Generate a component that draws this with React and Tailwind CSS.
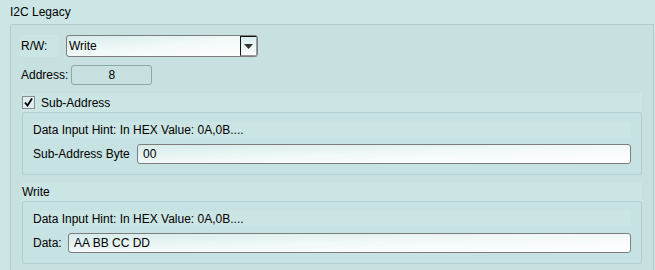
import React from 'react';

const font = { fontFamily: '"Liberation Sans", Arial, sans-serif' };

function TextBox({ value, className = '' }) {
  return (
    <div
      className={`h-[20px] flex items-center pl-[5px] rounded-[3px] border border-[#7d7d7d] bg-gradient-to-br from-[#d6ebeb] via-[#f2f9f9] to-white text-[12px] text-black ${className}`}
    >
      {value}
    </div>
  );
}

function HintBox({ label, value, labelWidth }) {
  return (
    <div className="border border-[#b3d0d0] rounded-[2px] bg-[#c7e2e2] pl-[10px] pr-[10px] pt-[9px] pb-[10px]">
      <div className="h-[16px] flex items-center bg-[#cbe5e5] text-[12px]">
        Data Input Hint: In HEX Value: 0A,0B....
      </div>
      <div className="flex items-center mt-[6px]">
        <span className={`text-[12px] ${labelWidth}`}>{label}</span>
        <TextBox value={value} className="flex-1" />
      </div>
    </div>
  );
}

export default function App() {
  return (
    <div className="w-[655px] h-[270px] bg-[#cce5e5] text-black overflow-hidden flex flex-col" style={font}>
      <div className="h-[24px] pl-[10px] pt-[5px] text-[12px] leading-[14px]">I2C Legacy</div>
      <div className="flex-1 ml-[10px] mr-[1px] border-l border-t border-r border-[#b0cdcd] rounded-tl-[2px] bg-[#c7e1e1] pt-[10px] pl-[11px] pr-[11px]">
        <div className="flex items-center h-[22px]">
          <div className="w-[39px] ml-[-2px] h-[22px] flex items-center pl-[1px] bg-[#cbe4e4] text-[12px]">R/W:</div>
          <div className="ml-[7px] w-[192px] h-[22px] flex items-center rounded-[3px] border border-[#7d7d7d] bg-gradient-to-br from-[#d6ebeb] via-[#f2f9f9] to-white text-[12px] pl-[2px]">
            <span className="flex-1">Write</span>
            <div className="w-[17px] h-[20px] border border-[#111] border-r-[#9a9a9a] border-b-[#9a9a9a] bg-gradient-to-b from-[#d8ecec] to-white flex items-center justify-center">
              <svg width="9" height="5" viewBox="0 0 9 5">
                <path d="M0 0 H9 L4.5 5 Z" fill="#333" />
              </svg>
            </div>
          </div>
        </div>
        <div className="flex items-center mt-[8px] h-[19px]">
          <span className="ml-[-1px] text-[12px]">Address:</span>
          <div className="ml-[3px] w-[81px] h-[20px] flex items-center justify-center rounded-[3px] border border-[#8aa8a8] text-[12px]">8</div>
        </div>
        <div className="mt-[9px] h-[19px] flex items-center bg-[#cbe5e5]">
          <div className="w-[13px] h-[13px] border border-[#8c8c8c] bg-[#dceeee] flex items-center justify-center">
            <svg width="9" height="9" viewBox="0 0 9 9">
              <path d="M1 4.5 L3.5 7.5 L8 0.5" fill="none" stroke="#000" strokeWidth="1.8" />
            </svg>
          </div>
          <span className="ml-[6px] text-[12px]">Sub-Address</span>
        </div>
        <HintBox label="Sub-Address Byte" value="00" labelWidth="w-[104px]" />
        <div className="mt-[7px] h-[19px] flex items-center bg-[#cbe5e5] text-[12px]">Write</div>
        <HintBox label="Data:" value="AA BB CC DD" labelWidth="w-[35px]" />
      </div>
    </div>
  );
}
